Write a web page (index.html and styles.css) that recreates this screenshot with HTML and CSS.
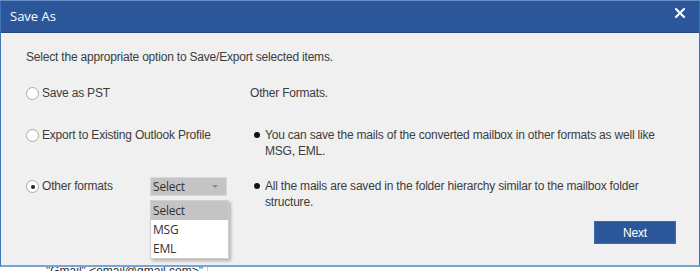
FILE: index.html
```html
<!DOCTYPE html>
<html>
<head>
<meta charset="utf-8">
<link rel="stylesheet" href="styles.css">
</head>
<body>
<div class="page">
  <div class="topstrip"></div>
  <div class="dialog">
    <div class="titlebar">
      <span class="title">Save As</span>
      <svg class="close" width="10" height="10" viewBox="0 0 10 10"><path d="M1 1 L9 9 M9 1 L1 9" stroke="#fff" stroke-width="2" stroke-linecap="square"/></svg>
    </div>
    <div class="body">
      <p class="intro">Select the appropriate option to Save/Export selected items.</p>
      <div class="row row1">
        <div class="left">
          <span class="radio"></span><span class="label">Save as PST</span>
        </div>
        <div class="right">Other Formats.</div>
      </div>
      <div class="row row2">
        <div class="left">
          <span class="radio"></span><span class="label">Export to Existing Outlook Profile</span>
        </div>
        <div class="right bullet"><span class="dot"></span><span>You can save the mails of the converted mailbox in other formats as well like<br>MSG, EML.</span></div>
      </div>
      <div class="row row3">
        <div class="left">
          <span class="radio checked"></span><span class="label fixed">Other formats</span>
          <div class="select">
            <span>Select</span>
            <svg width="6" height="4" viewBox="0 0 6 4"><path d="M0 0 H6 L3 3 Z" fill="#8a8a8a"/></svg>
            <ul class="list">
              <li class="sel">Select</li>
              <li>MSG</li>
              <li>EML</li>
            </ul>
          </div>
        </div>
        <div class="right bullet"><span class="dot"></span><span>All the mails are saved in the folder hierarchy similar to the mailbox folder<br>structure.</span></div>
      </div>
      <div class="footer">
        <button class="next">Next</button>
      </div>
    </div>
  </div>
  <div class="under"><span class="utext">"Gmail" &lt;email@gmail.com&gt;"</span><span class="usep"></span></div>
</div>
</body>
</html>
```
FILE: styles.css
```css
* { box-sizing: border-box; }
html, body { margin: 0; padding: 0; }
body { background: #ffffff; width: 700px; height: 271px; overflow: hidden; }
.page { width: 700px; height: 271px; display: flex; flex-direction: column; }
.topstrip { height: 1px; background: #6a8fc8; }
.dialog { height: 266px; border-left: 1px solid #3f73b8; border-right: 1px solid #3f73b8; border-bottom: 2px solid #7aa3d3; display: flex; flex-direction: column; background: #f0f0f0; }
.titlebar { height: 32px; background: #2b579a; display: flex; align-items: center; justify-content: space-between; padding: 0 14px 2px 9px; border-bottom: 1px solid #24497f; }
.title { color: #fff; font-family: "Open Sans", "Noto Sans", sans-serif; font-size: 13px; }
.close { margin-top: -6px; }
.body { flex: 1; padding: 0 0 0 25px; font-family: "Liberation Sans", Arial, sans-serif; font-size: 12px; letter-spacing: -0.2px; color: #3c3c3c; position: relative; }
.intro { margin: 16px 0 0; line-height: 16px; height: 16px; }
.row { display: flex; }
.row1 { margin-top: 20px; height: 42px; }
.row2 { height: 51px; }
.row3 { height: 50px; }
.left { width: 224px; display: flex; align-items: flex-start; height: 16px; }
.radio { width: 13px; height: 13px; border: 1px solid #a9a9a9; border-radius: 50%; background: #fff; margin-top: 2px; display: flex; align-items: center; justify-content: center; flex: none; }
.radio.checked::after { content: ""; width: 4px; height: 4px; border-radius: 50%; background: #222; }
.label { margin-left: 3px; line-height: 16px; }
.label.fixed { width: 108px; }
.right { line-height: 16px; flex: 1; }
.bullet { display: flex; padding-left: 4px; }
.dot { width: 6px; height: 6px; border-radius: 50%; background: #111; margin-top: 5px; margin-right: 5px; flex: none; }
.select { position: relative; width: 77px; height: 19px; background: #c4c4c4; border: 1px solid #d8d8d8; margin-top: -1px; display: flex; align-items: center; justify-content: space-between; padding: 0 8px 0 2px; font-family: "Open Sans", "Noto Sans", sans-serif; font-size: 12px; color: #333; letter-spacing: -0.2px; }
.list { position: absolute; left: -1px; top: 22px; width: 79px; margin: 0; padding: 0; list-style: none; background: #fff; border: 1px solid #d0d0d0; box-shadow: 2px 2px 3px rgba(0,0,0,0.25); }
.list li { height: 19px; line-height: 19px; padding-left: 2px; }
.list li.sel { background: #c4c4c4; }
.footer { display: flex; justify-content: flex-end; padding-right: 23px; margin-top: -7px; }
.next { width: 82px; height: 23px; background: #2b579a; border: 1px solid #3d6cb0; color: #fff; font-family: "Liberation Sans", Arial, sans-serif; font-size: 12px; letter-spacing: -0.2px; padding: 0; }
.under { flex: 1; display: flex; background: #fff; position: relative; overflow: hidden; }
.utext { margin-left: 46px; margin-top: -2px; font-family: "Liberation Sans", Arial, sans-serif; font-size: 12px; color: #333; line-height: 12px; }
.usep { width: 1px; background: #ccc; margin-left: 4px; }
```
